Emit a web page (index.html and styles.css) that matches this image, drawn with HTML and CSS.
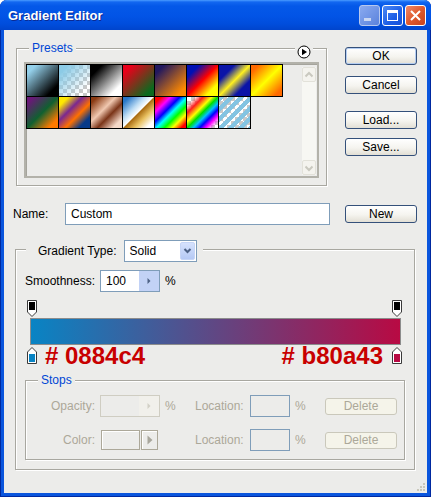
FILE: index.html
```html
<!DOCTYPE html>
<html lang="en">
<head>
    <meta charset="UTF-8">
    <meta name="viewport" content="width=device-width, initial-scale=1.0">
    <title>Gradient Editor</title>
    <link rel="stylesheet" href="styles.css">
</head>
<body>
    <div class="window">
        <div class="titlebar">
            <span class="title">Gradient Editor</span>
            <div class="caption-btns">
                <span class="cap cap-min"><svg width="19" height="19" viewBox="0 0 19 19"><rect x="4" y="12" width="7" height="3" fill="#c9d6f2"/></svg></span>
                <span class="cap cap-max"><svg width="19" height="19" viewBox="0 0 19 19"><rect x="4.5" y="4.5" width="10" height="10" fill="none" stroke="#fff"/><rect x="4" y="4" width="11" height="3" fill="#fff"/></svg></span>
                <span class="cap cap-close"><svg width="19" height="19" viewBox="0 0 19 19"><path d="M5 5L14 14M14 5L5 14" stroke="#fff" stroke-width="2"/></svg></span>
            </div>
        </div>

        <div class="client">
            <div class="top-row">
                <div class="group presets">
                    <span class="group-title">Presets</span>
                    <span class="menu-arrow"><svg width="14" height="14" viewBox="0 0 14 14"><circle cx="7" cy="7" r="6" fill="#fff" stroke="#000"/><path d="M5 3.8L10 7L5 10.2Z" fill="#000"/></svg></span>
                    <div class="preset-list">
                        <div class="swatches">
                            <span class="sw sw1"></span>
                            <span class="sw sw2"></span>
                            <span class="sw sw3"></span>
                            <span class="sw sw4"></span>
                            <span class="sw sw5"></span>
                            <span class="sw sw6"></span>
                            <span class="sw sw7"></span>
                            <span class="sw sw8"></span>
                            <span class="sw sw9"></span>
                            <span class="sw sw10"></span>
                            <span class="sw sw11"></span>
                            <span class="sw sw12"></span>
                            <span class="sw sw13"></span>
                            <span class="sw sw14"></span>
                            <span class="sw sw15"></span>
                        </div>
                        <div class="vscroll">
                            <span class="sb-btn"><svg width="12" height="12" viewBox="0 0 12 12"><path d="M2.5 7.5L6 4L9.5 7.5" fill="none" stroke="#c9c8bf" stroke-width="2"/></svg></span>
                            <span class="sb-track"></span>
                            <span class="sb-btn"><svg width="12" height="12" viewBox="0 0 12 12"><path d="M2.5 4.5L6 8L9.5 4.5" fill="none" stroke="#c9c8bf" stroke-width="2"/></svg></span>
                        </div>
                    </div>
                </div>
                <div class="side-btns">
                    <button class="btn default">OK</button>
                    <button class="btn btn-cancel">Cancel</button>
                    <button class="btn btn-load">Load...</button>
                    <button class="btn btn-save">Save...</button>
                </div>
            </div>

            <div class="name-row">
                <span class="name-label">Name:</span>
                <div class="text-input">Custom</div>
                <button class="btn">New</button>
            </div>

            <div class="group gradient-group">
                <div class="type-title">
                    <span class="type-label">Gradient Type:</span>
                    <div class="combo">
                        <span class="combo-val">Solid</span>
                        <span class="combo-btn"><svg width="13" height="16" viewBox="0 0 13 16"><path d="M3.5 6L6.5 9L9.5 6" fill="none" stroke="#4d6185" stroke-width="2"/></svg></span>
                    </div>
                </div>

                <div class="smooth-row">
                    <span class="smooth-label">Smoothness:</span>
                    <div class="spin">
                        <span class="spin-val">100</span>
                        <span class="spin-btn"><svg width="6" height="8" viewBox="0 0 6 8"><path d="M1.5 1L4.5 4L1.5 7Z" fill="#4d6185"/></svg></span>
                    </div>
                    <span class="pct">%</span>
                </div>

                <div class="stops-top">
                    <svg width="10" height="17" viewBox="0 0 10 17"><path d="M0.5 0.5H9.5V12L5 16.5L0.5 12Z" fill="#fff" stroke="#3a3a3a"/><rect x="2" y="2" width="6" height="8" fill="#000"/></svg>
                    <svg width="10" height="17" viewBox="0 0 10 17"><path d="M0.5 0.5H9.5V12L5 16.5L0.5 12Z" fill="#fff" stroke="#3a3a3a"/><rect x="2" y="2" width="6" height="8" fill="#000"/></svg>
                </div>
                <div class="bar"></div>
                <div class="stops-bottom">
                    <svg width="10" height="17" viewBox="0 0 10 17"><path d="M5 0.5L9.5 5V16.5H0.5V5Z" fill="#fff" stroke="#3a3a3a"/><rect x="2" y="7" width="6" height="8" fill="#0884c4"/></svg>
                    <span class="hex hex-left"># 0884c4</span>
                    <span class="spacer"></span>
                    <span class="hex hex-right"># b80a43</span>
                    <svg width="10" height="17" viewBox="0 0 10 17"><path d="M5 0.5L9.5 5V16.5H0.5V5Z" fill="#fff" stroke="#3a3a3a"/><rect x="2" y="7" width="6" height="8" fill="#b80a43"/></svg>
                </div>

                <div class="group stops-group">
                    <span class="group-title">Stops</span>
                    <div class="stops-grid">
                        <span class="dim right">Opacity:</span>
                        <div class="field">
                            <div class="spin spin-off">
                                <span class="spin-val"></span>
                                <span class="spin-btn"><svg width="6" height="8" viewBox="0 0 6 8"><path d="M1.5 1L4.5 4L1.5 7Z" fill="#d2d0c6"/></svg></span>
                            </div>
                            <span class="pct dim">%</span>
                        </div>
                        <span class="dim">Location:</span>
                        <div class="field loc-field">
                            <div class="loc-input"></div>
                            <span class="pct dim">%</span>
                        </div>
                        <button class="btn btn-off">Delete</button>

                        <span class="dim right">Color:</span>
                        <div class="field">
                            <div class="color-box"></div>
                            <span class="color-arrow"><svg width="8" height="12" viewBox="0 0 8 12"><path d="M1.5 1.5L6.5 6L1.5 10.5Z" fill="#a8a69c"/></svg></span>
                        </div>
                        <span class="dim">Location:</span>
                        <div class="field loc-field">
                            <div class="loc-input"></div>
                            <span class="pct dim">%</span>
                        </div>
                        <button class="btn btn-off">Delete</button>
                    </div>
                </div>
            </div>

            <span class="grip"><svg width="11" height="11" viewBox="0 0 11 11" fill="#c9c7ba"><rect x="8" y="2" width="2" height="2"/><rect x="5" y="5" width="2" height="2"/><rect x="8" y="5" width="2" height="2"/><rect x="2" y="8" width="2" height="2"/><rect x="5" y="8" width="2" height="2"/><rect x="8" y="8" width="2" height="2"/></svg></span>
        </div>
    </div>
</body>
</html>
```

FILE: styles.css
```css
body {
    margin: 0;
    font-family: "Liberation Sans", Arial, sans-serif;
    font-size: 12px;
    color: #000;
    background: #fff;
}
.window {
    width: 431px;
    height: 497px;
    display: flex;
    flex-direction: column;
    background: #0a55dd;
    border-radius: 7px 7px 0 0;
    box-shadow: inset 1px 0 #0029a0, inset -1px 0 #0029a0, inset 0 -1px #0029a0;
}
.titlebar {
    height: 30px;
    flex: none;
    display: flex;
    align-items: center;
    padding: 0 5px 0 8px;
    border-radius: 7px 7px 0 0;
    background: linear-gradient(#4a9cff 0, #1267f0 2px, #0458e8 6px, #0254e6 16px, #004ddc 24px, #0044cc 30px);
}
.title {
    flex: 1;
    color: #fff;
    font-weight: bold;
    font-size: 13px;
    text-shadow: 1px 1px #0b2a92;
}
.caption-btns {
    display: flex;
    gap: 2px;
}
.cap {
    width: 21px;
    height: 21px;
    box-sizing: border-box;
    border: 1px solid #fff;
    border-radius: 3px;
    display: flex;
    align-items: center;
    justify-content: center;
}
.cap-min {
    border-color: #b7c8ee;
    background: linear-gradient(135deg, #8aaaf0, #5a82dc);
}
.cap-max {
    background: linear-gradient(135deg, #4d8af5, #1d5ee6 60%, #1650d8);
}
.cap-close {
    background: linear-gradient(135deg, #ef8a6a, #e05a2e 50%, #c8431c);
}

.client {
    flex: 1;
    margin: 0 4px 4px;
    background: #ececea;
    position: relative;
}

/* group boxes */
.group {
    position: relative;
    box-sizing: border-box;
    border: 1px solid #a8a7a0;
    box-shadow: inset 1px 1px 0 #fff, 1px 1px 0 #fff;
}
.group-title {
    position: absolute;
    top: -8px;
    left: 12px;
    padding: 0 3px;
    line-height: 14px;
    color: #0046d5;
    background: #ececea;
}

.top-row {
    display: flex;
    align-items: flex-start;
    padding: 17px 0 0 12px;
}
.presets {
    width: 311px;
    height: 138px;
    margin-top: 1px;
    padding: 13px 7px 7px;
}
.menu-arrow {
    position: absolute;
    top: -4px;
    left: 278px;
    padding: 0 2px;
    background: #ececea;
    display: flex;
}
.preset-list {
    height: 100%;
    box-sizing: border-box;
    border: 2px solid #b3b2aa;
    box-shadow: inset 1px 1px 0 #a5a49c;
    display: flex;
}
.swatches {
    flex: 1;
    display: grid;
    grid-template-columns: repeat(8, 31px);
    grid-auto-rows: 31px;
    gap: 1px;
    padding: 1px;
    align-content: start;
}
.sw {
    box-shadow: 0 0 0 1px #000;
}
.sw1 { background: linear-gradient(135deg, #94d0ea 15%, #000 82%); }
.sw2 { background: linear-gradient(135deg, #8ccbe6 15%, rgba(140, 203, 230, 0) 80%), repeating-conic-gradient(#c8c8c8 0 25%, #fff 0 50%) 0 0 / 8px 8px; }
.sw3 { background: linear-gradient(135deg, #000 18%, #fff 80%); }
.sw4 { background: linear-gradient(135deg, #e8001a 15%, #0a6a1e 85%); }
.sw5 { background: linear-gradient(135deg, #22185e 15%, #ff8a00 85%); }
.sw6 { background: linear-gradient(135deg, #0010b4 20%, #ff0000 50%, #ffff00 80%); }
.sw7 { background: linear-gradient(135deg, #0a14a8 25%, #fff020 50%, #0a14a8 75%); }
.sw8 { background: linear-gradient(135deg, #ff6a00 12%, #ffff00 50%, #ff6a00 88%); }
.sw9 { background: linear-gradient(135deg, #6a1878 10%, #106030 50%, #ff7a00 85%); }
.sw10 { background: linear-gradient(135deg, #ffe800 15%, #7a2890 38%, #ff7000 60%, #083a88 82%); }
.sw11 { background: linear-gradient(135deg, #8a3a12 10%, #f0c8b0 40%, #7a3418 60%, #f4d8c8 85%); }
.sw12 { background: linear-gradient(135deg, #2a78c8 10%, #bcdcf4 35%, #fff 49%, #a86a10 51%, #e8c060 68%, #fff 88%); }
.sw13 { background: linear-gradient(135deg, #ff0000 10%, #ff00ff 25%, #0000ff 40%, #00ffff 52%, #00ff00 65%, #ffff00 78%, #ff0000 92%); }
.sw14 { background: linear-gradient(135deg, rgba(255, 0, 0, 0) 12%, #ff2020 26%, #ffff00 40%, #00e000 50%, #00c0ff 60%, #0000ff 70%, #ff00ff 80%, rgba(255, 0, 255, 0) 92%), repeating-conic-gradient(#c8c8c8 0 25%, #fff 0 50%) 0 0 / 8px 8px; }
.sw15 { background: repeating-linear-gradient(135deg, #84c4e2 0 4px, rgba(132, 196, 226, 0) 4px 7px), repeating-conic-gradient(#c8c8c8 0 25%, #fff 0 50%) 0 0 / 8px 8px; }

.vscroll {
    width: 14px;
    margin: 3px 1px 1px 0;
    display: flex;
    flex-direction: column;
    background: #f7f7f3;
}
.sb-btn {
    height: 15px;
    box-sizing: border-box;
    border: 1px solid #e2e1d9;
    border-radius: 2px;
    background: #f4f3ee;
    display: flex;
    align-items: center;
    justify-content: center;
}
.sb-track {
    flex: 1;
}

/* buttons */
.side-btns {
    display: flex;
    flex-direction: column;
    margin-left: 18px;
}
.btn {
    width: 72px;
    height: 18px;
    box-sizing: border-box;
    padding: 0;
    border: 1px solid #34507a;
    border-radius: 3px;
    background: linear-gradient(#fff, #f5f4ef 55%, #e2dfd5);
    font-family: inherit;
    font-size: 12px;
    line-height: 15px;
    color: #000;
}
.btn.default {
    box-shadow: inset 0 0 0 1px #b4cdf2;
}
.btn-cancel { margin-top: 11px; }
.btn-load { margin-top: 17px; }
.btn-save { margin-top: 9px; }

.name-row {
    display: flex;
    align-items: center;
    height: 22px;
    margin-top: 17px;
    padding-left: 9px;
}
.name-label {
    width: 52px;
}
.text-input {
    width: 265px;
    height: 22px;
    box-sizing: border-box;
    border: 1px solid #7f9db9;
    background: #fff;
    padding-left: 5px;
    line-height: 20px;
}
.name-row .btn {
    margin-left: 15px;
}

/* gradient group */
.gradient-group {
    width: 400px;
    height: 221px;
    margin: 24px 0 0 11px;
    padding: 20px 0 0 9px;
}
.type-title {
    position: absolute;
    top: -10px;
    left: 10px;
    display: flex;
    align-items: center;
    padding: 0 6px 0 12px;
    background: #ececea;
}
.type-label {
    margin-right: 7px;
}
.combo {
    width: 73px;
    height: 22px;
    box-sizing: border-box;
    border: 1px solid #7f9db9;
    background: #fff;
    display: flex;
    align-items: center;
}
.combo-val {
    flex: 1;
    padding-left: 5px;
}
.combo-btn {
    width: 15px;
    height: 18px;
    margin-right: 1px;
    border: 1px solid #c6d5f6;
    border-radius: 2px;
    background: linear-gradient(#d6e2fd, #b5c9f4);
    display: flex;
    align-items: center;
    justify-content: center;
    box-sizing: border-box;
}

.smooth-row {
    display: flex;
    align-items: center;
    height: 22px;
}
.smooth-label {
    width: 75px;
}
.spin {
    width: 60px;
    height: 22px;
    box-sizing: border-box;
    border: 1px solid #7f9db9;
    background: #fff;
    display: flex;
}
.spin-val {
    flex: 1;
    padding-left: 5px;
    line-height: 20px;
}
.spin-btn {
    width: 20px;
    background: #c2d2f6;
    display: flex;
    align-items: center;
    justify-content: center;
}
.pct {
    margin-left: 5px;
}

.stops-top,
.stops-bottom {
    width: 377px;
    height: 17px;
    box-sizing: border-box;
    padding-left: 2px;
    display: flex;
    align-items: center;
}
.stops-top {
    justify-content: space-between;
    margin-top: 8px;
}
.stops-top svg,
.stops-bottom svg {
    flex: none;
}
.bar {
    width: 371px;
    height: 27px;
    box-sizing: border-box;
    margin: 1px 0 0 5px;
    border: 1px solid #8c8c8c;
    background: linear-gradient(to right, #0884c4, #b80a43);
}
.stops-bottom {
    margin-top: 2px;
}
.hex {
    font-size: 24px;
    font-weight: bold;
    line-height: 17px;
    color: #c80000;
}
.hex-left {
    margin-left: 8px;
}
.hex-right {
    margin-right: 9px;
}
.spacer {
    flex: 1;
}

/* stops */
.stops-group {
    width: 380px;
    height: 80px;
    margin-top: 16px;
}
.stops-grid {
    display: grid;
    grid-template-columns: 69px 100px 55px 75px 72px;
    grid-template-rows: 22px 22px;
    row-gap: 12px;
    align-items: center;
    padding-top: 14px;
}
.dim {
    color: #aca899;
}
.right {
    text-align: right;
}
.field {
    display: flex;
    align-items: center;
    padding-left: 5px;
}
.field.loc-field {
    padding-left: 0;
}
.spin-off {
    border-color: #cfcdc2;
    background: #ececea;
}
.spin-off .spin-btn {
    background: #f1f0eb;
}
.loc-input {
    width: 40px;
    height: 22px;
    box-sizing: border-box;
    border: 1px solid #7f9db9;
}
.color-box {
    width: 39px;
    height: 20px;
    margin-left: 1px;
    box-sizing: border-box;
    border: 1px solid #aca899;
    box-shadow: inset 1px 1px 0 #fff;
}
.color-arrow {
    width: 17px;
    height: 20px;
    margin-left: 1px;
    box-sizing: border-box;
    border: 1px solid #aca899;
    box-shadow: inset 1px 1px 0 #fff;
    display: flex;
    align-items: center;
    justify-content: center;
}
.btn-off {
    height: 17px;
    border-color: #cac8bb;
    background: #f5f4ea;
    color: #aca899;
}

.grip {
    position: absolute;
    right: 1px;
    bottom: 1px;
    display: flex;
}
```
